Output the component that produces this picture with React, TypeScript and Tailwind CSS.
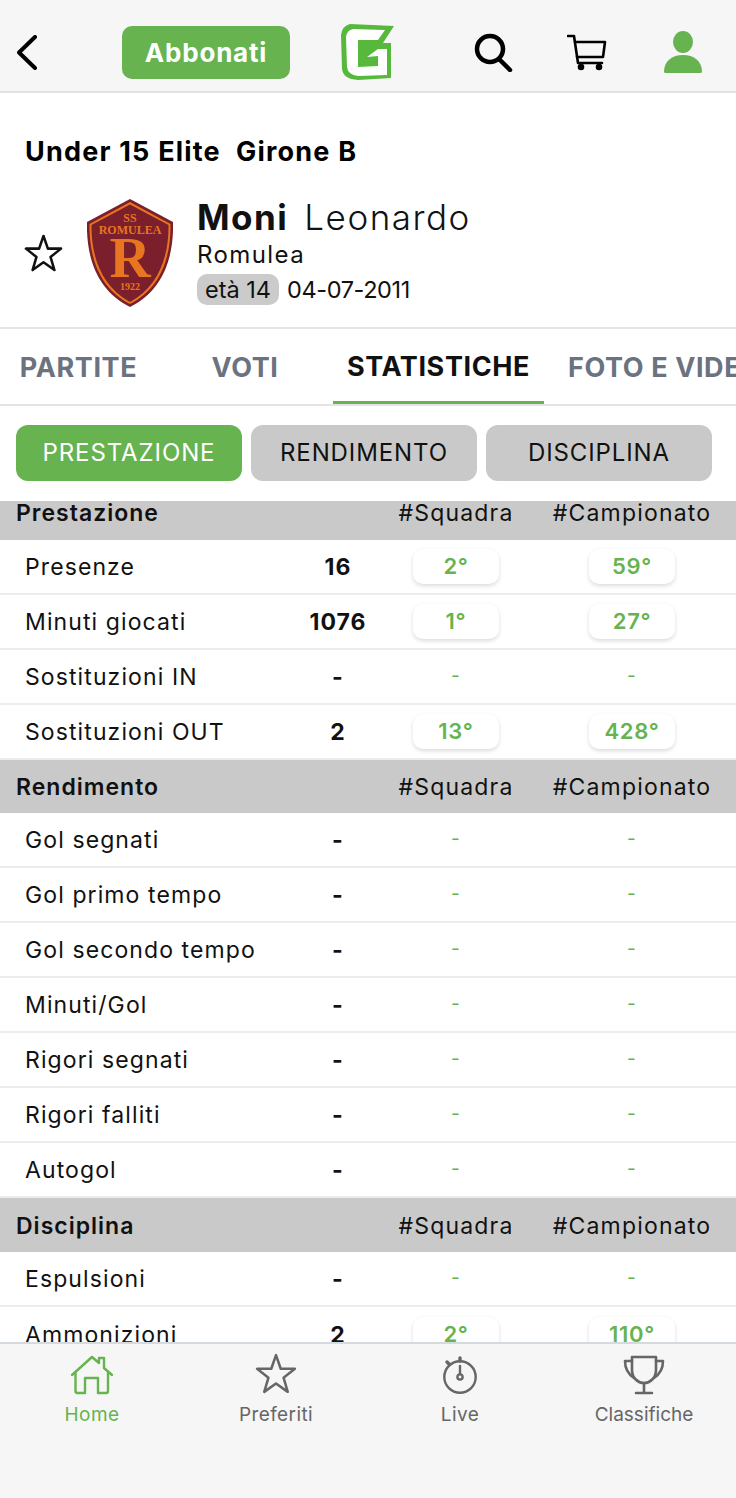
const sans = "font-['Inter','Noto_Sans',sans-serif]";

type Row = { label: string; value: string; team: string; league: string };

const prestazione: Row[] = [
    { label: "Presenze", value: "16", team: "2°", league: "59°" },
    { label: "Minuti giocati", value: "1076", team: "1°", league: "27°" },
    { label: "Sostituzioni IN", value: "-", team: "-", league: "-" },
    { label: "Sostituzioni OUT", value: "2", team: "13°", league: "428°" },
];

const rendimento: Row[] = [
    "Gol segnati",
    "Gol primo tempo",
    "Gol secondo tempo",
    "Minuti/Gol",
    "Rigori segnati",
    "Rigori falliti",
    "Autogol",
].map((label) => ({ label, value: "-", team: "-", league: "-" }));

const disciplina: Row[] = [
    { label: "Espulsioni", value: "-", team: "-", league: "-" },
    { label: "Ammonizioni", value: "2", team: "2°", league: "110°" },
];

const Rank = ({ text }: { text: string }) =>
    text === "-" ? (
        <span className="text-[19px] text-[#66b34f]">-</span>
    ) : (
        <span className="flex h-[35px] w-[86px] items-center justify-center rounded-[10px] bg-white text-[22px] font-semibold tracking-[0.7px] text-[#66b34f] shadow-[0_2px_4px_rgba(0,0,0,0.14)]">
            {text}
        </span>
    );

const SectionHeader = ({ title, size }: { title: string; size: string }) => (
    <div className={`flex items-center bg-[#c9c9c9] pl-4 pr-4 text-[23px] tracking-[1.2px] text-[#111] ${size}`}>
        <span className="flex-1 font-semibold tracking-[1px]">{title}</span>
        <span className="w-[176px] shrink-0 text-center">#Squadra</span>
        <span className="w-[176px] shrink-0 text-center">#Campionato</span>
    </div>
);

const StatRow = ({ row }: { row: Row }) => (
    <div className="flex h-[55px] items-center border-b-2 border-[#ececec] bg-white pl-[25px] pr-4 text-[23px] tracking-[1.1px] text-[#111] last:border-b-0">
        <span className="mt-[2px] w-[283px] shrink-0">{row.label}</span>
        <span className="mt-[2px] w-[60px] shrink-0 whitespace-nowrap text-center font-bold tracking-[1px]">{row.value}</span>
        <div className="flex w-[176px] shrink-0 justify-center">
            <Rank text={row.team} />
        </div>
        <div className="flex w-[176px] shrink-0 justify-center">
            <Rank text={row.league} />
        </div>
    </div>
);

const Back = () => (
    <svg width="20" height="35" viewBox="0 0 20 35" fill="none" stroke="#000" strokeWidth="4" strokeLinecap="round" strokeLinejoin="round">
        <path d="M18 2 L2 17.5 L18 33" />
    </svg>
);

const Logo = () => (
    <svg width="54" height="58" viewBox="10 8 54 58">
        <path d="M20 9 L64 11 L53 28 L61 28 L61 63 L28 65 Q13 64 12 54 L11 20 Q12 11 20 9 Z" fill="#56b93c" />
        <path d="M23 14 L55 15 L48 25 L28 25 L28 52 L48 51 L48 41 L37 42 L48 34 L57 34 L57 60 L28 61 Q18 60 17 52 L16 22 Q17 15 23 14 Z" fill="#fff" />
    </svg>
);

const Search = () => (
    <svg width="40" height="39" viewBox="0 0 40 39" fill="none" stroke="#000" strokeWidth="4.5" strokeLinecap="round">
        <circle cx="16" cy="16" r="13" />
        <path d="M25 26 L36 37" />
    </svg>
);

const Cart = () => (
    <svg width="40" height="38" viewBox="0 0 40 38" fill="none" stroke="#000" strokeWidth="2.6" strokeLinecap="round" strokeLinejoin="round">
        <path d="M1 3 H7 L11 30 H35" />
        <path d="M8 9 H38 L36 24 H10" />
        <circle cx="14" cy="34" r="2" fill="#000" />
        <circle cx="32" cy="34" r="2" fill="#000" />
    </svg>
);

const User = () => (
    <svg width="40" height="42" viewBox="0 0 40 42" fill="#66b34f">
        <ellipse cx="20" cy="11" rx="10" ry="11" />
        <path d="M1 41 C1 30 9 24 20 24 C31 24 39 30 39 41 Q39 42 37 42 H3 Q1 42 1 41 Z" />
    </svg>
);

const Crest = () => (
    <svg width="86" height="108" viewBox="0 0 86 108">
        <path d="M43 0 L86 23 C87 60 75 92 43 108 C11 92 -1 60 0 23 Z" fill="#7a1f2b" />
        <path d="M43 3 L83.500 25 C84 59 73 90 43 105 C13 90 2 59 2.500 25 Z" fill="#e8751f" />
        <path d="M43 5.500 L81.500 26 C82 58 71 88 43 103 C15 88 4 58 4.500 26 Z" fill="#7a1f2b" />
        <text x="43" y="23" textAnchor="middle" fontFamily="Liberation Serif" fontWeight="700" fontSize="12" fill="#e8751f">SS</text>
        <text x="43" y="35" textAnchor="middle" fontFamily="Liberation Serif" fontWeight="700" fontSize="12" fill="#e8751f">ROMULEA</text>
        <text x="43" y="78" textAnchor="middle" fontFamily="Liberation Serif" fontWeight="700" fontSize="57" fill="#e8751f">R</text>
        <text x="43" y="91" textAnchor="middle" fontFamily="Liberation Serif" fontWeight="700" fontSize="10" fill="#e8751f">1922</text>
    </svg>
);

const StarOutline = ({ size, color, width }: { size: number; color: string; width: number }) => (
    <svg width={size} height={size} viewBox="0 0 40 40" fill="none" stroke={color} strokeWidth={width} strokeLinejoin="round">
        <path d="M20 2 L24.500 15 L38 15 L27.200 23.500 L31.200 37 L20 29 L8.800 37 L12.800 23.500 L2 15 L15.500 15 Z" />
    </svg>
);

const Home = () => (
    <svg width="44" height="40" viewBox="0 0 44 40" fill="none" stroke="#66b34f" strokeWidth="2.4" strokeLinejoin="round" strokeLinecap="round">
        <path d="M2 20 L22 2 L29 8 V3 H34 V13 L42 20" />
        <path d="M5.500 18 V36 Q5.500 38 7.500 38 H15 V23 H28 V38 H36 Q38 38 38 36 V18" />
    </svg>
);

const Stopwatch = () => (
    <svg width="36" height="40" viewBox="0 0 36 40" fill="none" stroke="#666" strokeWidth="2.4" strokeLinecap="round">
        <circle cx="18" cy="22" r="15.700" />
        <path d="M18 3 V6 M5 7 L7 9" strokeWidth="3.400" />
        <path d="M18 11 V19" />
        <circle cx="18" cy="22" r="2.600" />
    </svg>
);

const Trophy = () => (
    <svg width="42" height="40" viewBox="0 0 42 40" fill="none" stroke="#666" strokeWidth="2.6" strokeLinejoin="round" strokeLinecap="round">
        <path d="M9 2 H33 V15 C33 23 27 28 21 28 C15 28 9 23 9 15 Z" />
        <path d="M9 6 H2 C2 14 5 19 11 23 M33 6 H40 C40 14 37 19 31 23" />
        <path d="M21 28 V38 M13 38 H29" />
    </svg>
);

const NavItem = ({ label, active, spacing, children }: { label: string; active?: boolean; spacing: string; children: React.ReactNode }) => (
    <div className={`flex w-[184px] flex-col items-center ${active ? "text-[#66b34f]" : "text-[#666]"}`}>
        <div className="flex h-[40px] items-end justify-center">{children}</div>
        <span className={`mt-[8px] text-[19px] leading-[24px] ${spacing}`}>{label}</span>
    </div>
);

export default function App() {
    return (
        <div className={`${sans} flex h-[1498px] w-[736px] flex-col overflow-hidden bg-white`}>
            {/* Barra in alto */}
            <header className="flex h-[93px] shrink-0 items-center border-b-2 border-[#e2e2e2] bg-[#f6f6f6] pt-[13px]">
                <div className="ml-[17px]">
                    <Back />
                </div>
                <button className="ml-[85px] h-[53px] w-[168px] rounded-[10px] bg-[#66b34f] text-[26px] font-bold tracking-[0.8px] text-white">
                    Abbonati
                </button>
                <div className="ml-[50px]">
                    <Logo />
                </div>
                <div className="ml-[80px]">
                    <Search />
                </div>
                <div className="ml-[53px]">
                    <Cart />
                </div>
                <div className="ml-[56px]">
                    <User />
                </div>
            </header>

            {/* Giocatore */}
            <section className="h-[236px] shrink-0 border-b-2 border-[#e4e4e4]">
                <h1 className="pl-[25px] pt-[42px] text-[27px] font-bold leading-[34px] tracking-[1.2px] text-black">
                    Under 15 Elite&nbsp; Girone B
                </h1>
                <div className="mt-[30px] flex items-center">
                    <div className="ml-[24px]">
                        <StarOutline size={39} color="#111" width={2.6} />
                    </div>
                    <div className="ml-[24px]">
                        <Crest />
                    </div>
                    <div className="-mt-[5px] ml-[24px]">
                        <div className="text-[35px] leading-[40px] tracking-[1.5px] text-[#111]">
                            <span className="font-bold">Moni</span>
                            <span className="ml-[16px] font-light">Leonardo</span>
                        </div>
                        <div className="mt-[2px] text-[24px] leading-[32px] tracking-[1.4px] text-[#111]">Romulea</div>
                        <div className="mt-[3px] flex items-center text-[23.5px] text-[#111]">
                            <span className="rounded-[10px] bg-[#cbcbcb] px-2 leading-[31px]">età 14</span>
                            <span className="ml-2 leading-[31px] tracking-[-0.4px]">04-07-2011</span>
                        </div>
                    </div>
                </div>
            </section>

            {/* Tab */}
            <nav className="flex h-[77px] shrink-0 items-stretch overflow-hidden whitespace-nowrap border-b-2 border-[#e4e4e4] text-[27px] font-bold tracking-[0.6px] text-[#6b7280]">
                <div className="flex w-[157px] shrink-0 items-center justify-center pt-1">PARTITE</div>
                <div className="flex w-[176px] shrink-0 items-center justify-center pt-1">VOTI</div>
                <div className="flex w-[211px] shrink-0 items-center justify-center border-b-[3px] border-[#66b34f] pt-[5px] text-[#111]">
                    STATISTICHE
                </div>
                <div className="flex shrink-0 items-center pl-6 pt-1">FOTO E VIDEO</div>
            </nav>

            {/* Filtri */}
            <div className="flex h-[95px] shrink-0 items-center gap-[9px] pb-[1px] pl-4 text-[24px] tracking-[0.9px]">
                <button className="h-[56px] w-[226px] rounded-[12px] bg-[#66b34f] text-white">PRESTAZIONE</button>
                <button className="h-[56px] w-[226px] rounded-[12px] bg-[#c9c9c9] text-[#111]">RENDIMENTO</button>
                <button className="h-[56px] w-[226px] rounded-[12px] bg-[#c9c9c9] text-[#111]">DISCIPLINA</button>
            </div>

            {/* Tabella */}
            <main className="min-h-0 flex-1 overflow-hidden">
                <div className="-mt-[14px]">
                    <SectionHeader title="Prestazione" size="h-[53px]" />
                    {prestazione.map((row) => (
                        <StatRow key={row.label} row={row} />
                    ))}
                    <SectionHeader title="Rendimento" size="h-[53px] pt-[2px]" />
                    {rendimento.map((row) => (
                        <StatRow key={row.label} row={row} />
                    ))}
                    <SectionHeader title="Disciplina" size="h-[54px] pt-[2px]" />
                    {disciplina.map((row) => (
                        <StatRow key={row.label} row={row} />
                    ))}
                </div>
            </main>

            {/* Barra in basso */}
            <footer className="flex h-[156px] shrink-0 border-t-2 border-[#d5d9e0] bg-[#f6f6f6] pt-[11px]">
                <NavItem label="Home" active spacing="tracking-[0.4px]">
                    <Home />
                </NavItem>
                <NavItem label="Preferiti" spacing="tracking-[0.4px]">
                    <StarOutline size={42} color="#666" width={2.4} />
                </NavItem>
                <NavItem label="Live" spacing="tracking-[0.4px]">
                    <Stopwatch />
                </NavItem>
                <NavItem label="Classifiche" spacing="tracking-[0px]">
                    <Trophy />
                </NavItem>
            </footer>
        </div>
    );
}
